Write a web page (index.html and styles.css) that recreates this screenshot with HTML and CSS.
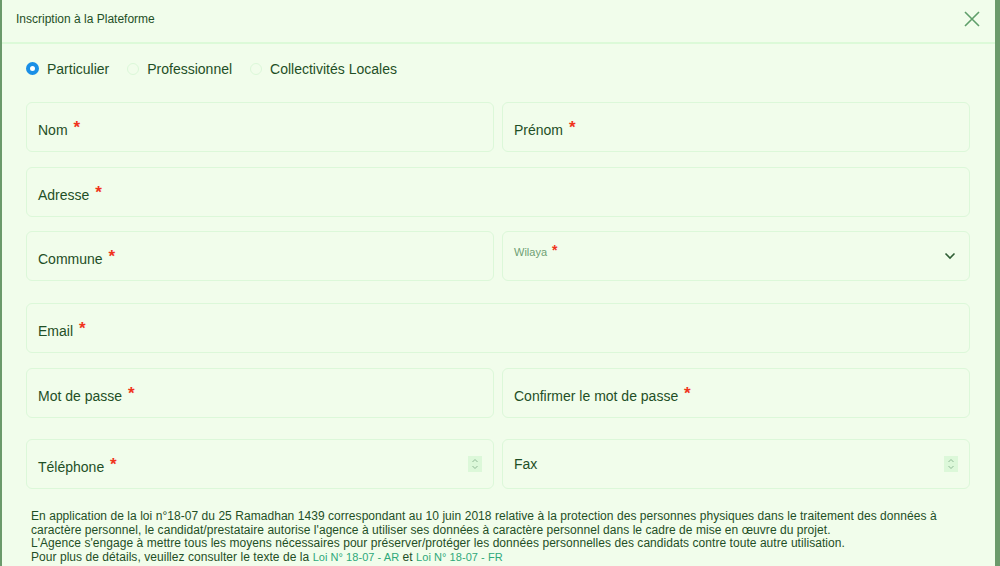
FILE: index.html
```html
<!DOCTYPE html>
<html lang="fr">
<head>
  <meta charset="UTF-8">
  <meta name="viewport" content="width=device-width, initial-scale=1.0">
  <title>Inscription</title>
  <link rel="stylesheet" href="styles.css">
</head>
<body>
  <div class="modal">
    <div class="modal-header">
      <span class="modal-title">Inscription à la Plateforme</span>
      <button class="close" aria-label="Fermer">
        <svg width="18" height="18" viewBox="0 0 18 18"><path d="M2 2 L16 16 M16 2 L2 16" stroke="#5f9f6a" stroke-width="1.6" fill="none"/></svg>
      </button>
    </div>

    <div class="modal-body">
      <div class="types">
        <label class="radio"><span class="dot checked"></span>Particulier</label>
        <label class="radio"><span class="dot"></span>Professionnel</label>
        <label class="radio"><span class="dot"></span>Collectivités Locales</label>
      </div>

      <div class="row">
        <div class="field"><span class="label">Nom <i>*</i></span></div>
        <div class="field"><span class="label">Prénom <i>*</i></span></div>
      </div>
      <div class="row">
        <div class="field"><span class="label">Adresse <i>*</i></span></div>
      </div>
      <div class="row tight">
        <div class="field"><span class="label">Commune <i>*</i></span></div>
        <div class="field select">
          <span class="small-label">Wilaya <i>*</i></span>
          <svg class="chevron" width="12" height="8" viewBox="0 0 12 8"><path d="M1.5 1.5 L6 6 L10.5 1.5" stroke="#2f5f35" stroke-width="1.6" fill="none"/></svg>
        </div>
      </div>
      <div class="row wide">
        <div class="field"><span class="label">Email <i>*</i></span></div>
      </div>
      <div class="row">
        <div class="field"><span class="label">Mot de passe <i>*</i></span></div>
        <div class="field"><span class="label">Confirmer le mot de passe <i>*</i></span></div>
      </div>
      <div class="row wide last">
        <div class="field"><span class="label">Téléphone <i>*</i></span><span class="spin"><svg width="8" height="12" viewBox="0 0 8 12"><path d="M1.5 4 L4 1.5 L6.5 4 M1.5 8 L4 10.5 L6.5 8" stroke="#8fb995" stroke-width="1" fill="none"/></svg></span></div>
        <div class="field"><span class="label up">Fax</span><span class="spin"><svg width="8" height="12" viewBox="0 0 8 12"><path d="M1.5 4 L4 1.5 L6.5 4 M1.5 8 L4 10.5 L6.5 8" stroke="#8fb995" stroke-width="1" fill="none"/></svg></span></div>
      </div>

      <p class="notice">
        En application de la loi n°18-07 du 25 Ramadhan 1439 correspondant au 10 juin 2018 relative à la protection des personnes physiques dans le traitement des données à caractère personnel, le candidat/prestataire autorise l'agence à utiliser ses données à caractère personnel dans le cadre de mise en œuvre du projet.<br>
        L'Agence s'engage à mettre tous les moyens nécessaires pour préserver/protéger les données personnelles des candidats contre toute autre utilisation.<br>
        Pour plus de détails, veuillez consulter le texte de la <a href="#">Loi N° 18-07 - AR</a> et <a href="#">Loi N° 18-07 - FR</a>
      </p>
    </div>
  </div>
</body>
</html>
```

FILE: styles.css
```css
body {
  margin: 0;
  font-family: 'Liberation Sans', Arial, sans-serif;
  background-color: #6b9a6b;
  overflow: hidden;
}

.modal {
  background-color: #f1fdeb;
  margin-left: 2px;
  margin-right: 5px;
  height: 566px;
  color: #1f4f26;
}

.modal-header {
  height: 42px;
  display: flex;
  align-items: center;
  justify-content: space-between;
  padding: 0 14px 0 14px;
  border-bottom: 2px solid #dcfad8;
}

.modal-title {
  font-size: 12px;
  color: #1f4f26;
  margin-top: -4px;
}

.close {
  background: none;
  border: none;
  padding: 0;
  margin-top: -4px;
  cursor: pointer;
  display: flex;
}

.modal-body {
  padding: 0 25px 0 24px;
}

.types {
  display: flex;
  align-items: center;
  height: 43px;
  box-sizing: border-box;
  padding-top: 6px;
  font-size: 14px;
}

.radio {
  display: flex;
  align-items: center;
  margin-right: 18px;
}

.dot {
  width: 12px;
  height: 12px;
  border: 1px solid #dcf8d9;
  border-radius: 50%;
  margin-right: 8px;
  box-sizing: border-box;
}

.dot.checked {
  border: 4px solid #1a8fe6;
  background-color: #fff;
  width: 13px;
  height: 13px;
}

.row {
  display: flex;
  gap: 8px;
  margin-top: 15px;
}

.row.tight {
  margin-top: 14px;
}

.row.wide {
  margin-top: 22px;
}

.row.wide.last {
  margin-top: 21px;
}

.field {
  flex: 1;
  height: 50px;
  box-sizing: border-box;
  border: 1.5px solid #dcf8d9;
  border-radius: 6px;
  display: flex;
  align-items: center;
  justify-content: space-between;
  padding: 5px 11px 0 11px;
  position: relative;
}

.label {
  font-size: 14px;
  color: #1f4f26;
}

.label.up {
  margin-top: -5px;
}

.label i,
.small-label i {
  font-style: normal;
  font-weight: bold;
  font-size: 17px;
  color: #f0341c;
  position: relative;
  top: -2px;
  margin-left: 2px;
}

.small-label {
  position: absolute;
  top: 11px;
  left: 11px;
  font-size: 11px;
  color: #6f9f74;
}

.small-label i {
  font-size: 14px;
  top: -1px;
}

.chevron {
  position: absolute;
  right: 13px;
  top: 20px;
}

.spin {
  width: 14px;
  height: 16px;
  background-color: #dcf8d9;
  display: flex;
  align-items: center;
  justify-content: center;
  margin-top: -6px;
}

.notice {
  font-size: 12px;
  line-height: 13.6px;
  letter-spacing: 0.05px;
  color: #1f4f26;
  margin: 21px 0 0 5px;
  padding-right: 20px;
}

.notice a {
  color: #2ea87a;
  text-decoration: none;
  font-size: 11px;
}
```
